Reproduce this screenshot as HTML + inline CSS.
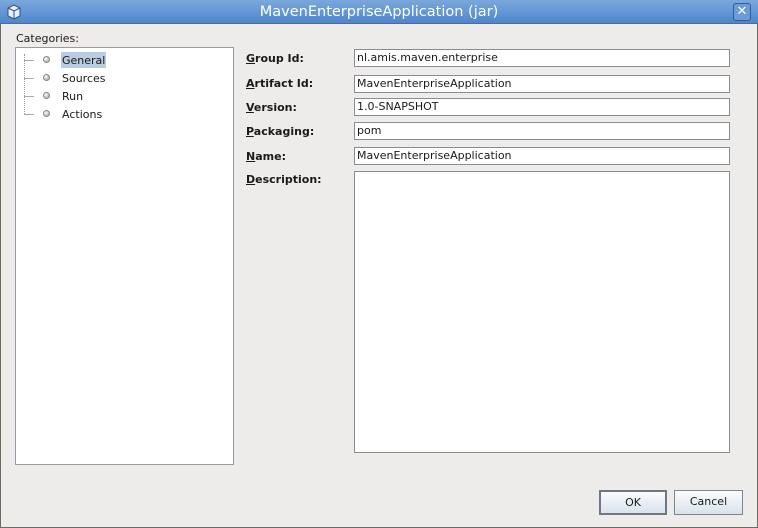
<!DOCTYPE html>
<html><head><meta charset="utf-8"><style>
*{margin:0;padding:0;box-sizing:border-box}
body{width:758px;height:528px;overflow:hidden;background:#edeceb;font-family:"DejaVu Sans","Liberation Sans",sans-serif;font-size:11px;color:#1a1a1a;position:relative}
.frame{position:absolute;left:0;top:0;width:758px;height:528px;border:1px solid #6b6b5e;border-top:none}
.title{position:absolute;left:0;top:0;width:758px;height:24px;background:linear-gradient(#7aa8dc,#4f86cb);border-bottom:1px solid #3f6fae;color:#fff;font-size:14.5px;text-align:center;line-height:24px}
.abs{position:absolute}
.tree{left:15px;top:47px;width:219px;height:418px;background:#fff;border:1px solid #9a9a9a}
.lbl{position:absolute;left:246px;font-weight:bold;font-size:11px}
.fld{position:absolute;left:354px;width:376px;height:18px;background:#fff;border:1px solid #8c8c8c;padding-left:2px;line-height:16px}
.btn{position:absolute;top:490px;height:25px;border:1px solid #7d8590;background:linear-gradient(#fbfcfd,#d9e2ec);text-align:center;line-height:22px;font-size:11px}
.dot{position:absolute;width:7px;height:7px;border-radius:50%;background:radial-gradient(circle at 35% 35%,#fff,#999);border:1px solid #888}
</style></head><body>
<div class="frame"></div>
<div class="title">MavenEnterpriseApplication (jar)</div>
<svg class="abs" style="left:6px;top:4px" width="16" height="16" viewBox="0 0 16 16"><path d="M8 1L14 4V12L8 15L2 12V4Z" fill="#e8f0fa" stroke="#2d4f7c"/><path d="M2 4L8 7L14 4M8 7V15" fill="none" stroke="#2d4f7c"/></svg>
<div class="abs" style="left:733px;top:3px;width:18px;height:18px;border:1px solid #2f5e9c;border-radius:3px;background:#6c9bd6;color:#fff;text-align:center;line-height:16px;font-weight:bold;font-size:13px">✕</div>
<div class="abs" style="left:16px;top:32px">Categories:</div>
<div class="abs tree"></div>
<div class="abs" style="left:24px;top:54px;width:1px;height:60px;border-left:1px dotted #999"></div>
<div class="abs" style="left:24px;top:60px;width:10px;border-top:1px solid #aaa"></div>
<div class="abs" style="left:24px;top:78px;width:10px;border-top:1px solid #aaa"></div>
<div class="abs" style="left:24px;top:96px;width:10px;border-top:1px solid #aaa"></div>
<div class="abs" style="left:24px;top:114px;width:10px;border-top:1px solid #aaa"></div>
<div class="dot" style="left:43px;top:56px"></div>
<div class="dot" style="left:43px;top:74px"></div>
<div class="dot" style="left:43px;top:92px"></div>
<div class="dot" style="left:43px;top:110px"></div>
<div class="abs" style="left:61px;top:52px;width:45px;height:16px;background:#b8cce4"></div>
<div class="abs" style="left:62px;top:54px">General</div>
<div class="abs" style="left:62px;top:72px">Sources</div>
<div class="abs" style="left:62px;top:90px">Run</div>
<div class="abs" style="left:62px;top:108px">Actions</div>

<div class="lbl" style="top:52px"><u>G</u>roup Id:</div>
<div class="lbl" style="top:77px"><u>A</u>rtifact Id:</div>
<div class="lbl" style="top:101px"><u>V</u>ersion:</div>
<div class="lbl" style="top:125px"><u>P</u>ackaging:</div>
<div class="lbl" style="top:150px"><u>N</u>ame:</div>
<div class="lbl" style="top:173px"><u>D</u>escription:</div>

<div class="fld" style="top:49px">nl.amis.maven.enterprise</div>
<div class="fld" style="top:75px">MavenEnterpriseApplication</div>
<div class="fld" style="top:98px">1.0-SNAPSHOT</div>
<div class="fld" style="top:122px">pom</div>
<div class="fld" style="top:147px">MavenEnterpriseApplication</div>
<div class="fld" style="top:171px;height:282px"></div>

<div class="btn" style="left:599px;width:68px;border:2px solid #6f7782">OK</div>
<div class="btn" style="left:674px;width:69px">Cancel</div>
</body></html>
